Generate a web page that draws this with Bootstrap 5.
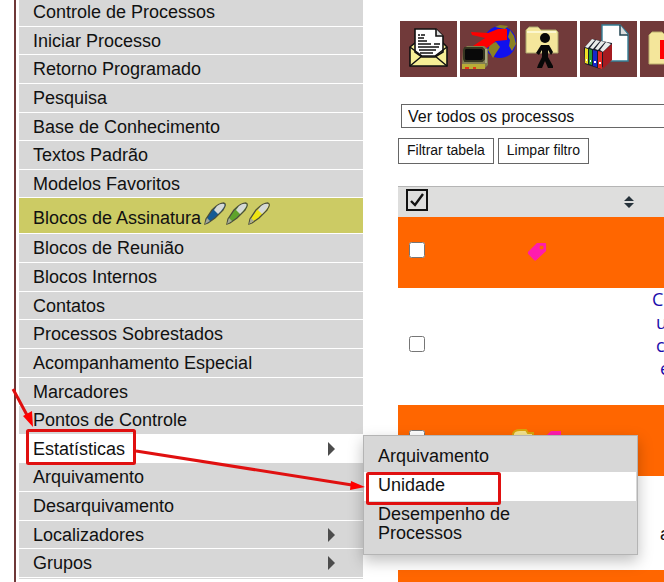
<!DOCTYPE html>
<html lang="pt-BR">
<head>
<meta charset="utf-8">
<meta name="viewport" content="width=device-width, initial-scale=1">
<title>Controle de Processos</title>
<link href="https://cdn.jsdelivr.net/npm/bootstrap@5.3.0/dist/css/bootstrap.min.css" rel="stylesheet">
<style>
body { font-family: "Liberation Sans", Arial, sans-serif; font-size: 18px; line-height: 19px; color: #111; background: #fff; }
.side { flex: 0 0 349px; margin-left: 14px; border-left: 2px solid #6e3838; padding-left: 3px; }
.side-menu { margin-top: -2px; padding-bottom: 2px; }
.side-menu > li { flex: 1 1 28px; border-bottom: 1px solid #fff; background: #d7d7d7; position: relative; }
.side-menu > li.pens { flex: 0 0 36px; background: #cccb64; }
.side-menu > li.open { background: #fff; }
.side-menu > li.tail { flex: 0 0 2px; }
.side-menu a, .sub-menu a { color: inherit; text-decoration: none; display: block; padding: 5px 14px 0; }
.side-menu .pens > a { display: flex; gap: 3px; padding-top: 4px; }
.side-menu .pens span { padding-top: 7px; }
.side-menu > li > a.has-sub { display: flex; justify-content: space-between; padding-right: 28px; }
.caret-r { width: 7px; height: 14px; margin-top: 2px; fill: #4c4c4c; }
.sub-menu { position: absolute; left: 100%; top: 0; width: 275px; z-index: 5; background: #d7d7d7; border: 1px solid #b4b4b4; padding: 7px 1px 5px 0; box-shadow: 0 6px 14px rgba(0,0,0,.25); }
.sub-menu a { padding: 4px 14px 6px; }
.sub-menu a.picked { background: #fff; }
.sub-menu li:last-child a { padding-right: 90px; }
.content-pane { padding: 21px 0 0 35px; }
.tool-btn { flex: 0 0 57px; height: 56px; background: #713a3a; border: 0; padding: 0; }
.tool-btn svg { display: block; width: 57px; height: 56px; }
.tools { gap: 3px; padding-left: 2px; }
.view-pick { appearance: none; font-size: 16px; line-height: 19px; height: 24px; width: 500px; margin: 27px 0 10px 3px; padding: 1px 6px; border: 1px solid #666; background: #fff; color: #111; }
.flat-btn { font-size: 14px; line-height: 16px; height: 26px; padding: 0 8px 2px 8px; background: #fff; border: 1px solid #666; color: #111; }
.proc-table { table-layout: fixed; width: 538px; margin-top: 22px; border-collapse: collapse; }
.proc-table th, .proc-table td { padding: 0; }
.proc-table .head { height: 30px; background: #dededd; border-top: 1px solid #b5b5b5; }
.proc-table .hot { background: #ff6600; }
.h-s { height: 71px; } .h-l { height: 117px; } .h-m { height: 94px; }
.proc-table input { display: block; width: 16px; height: 16px; margin: 0 0 4px 11px; }
.all-btn { display: block; margin: 0 0 4px 8px; width: 22px; height: 22px; padding: 0; border: 2px solid #111; background: #dededd; }
.all-btn svg { display: block; }
.desc { color: #1a0dab; font-family: "Open Sans", sans-serif; font-size: 18px; line-height: 23px; }
.notes { position: absolute; left: 0; top: 0; z-index: 10; pointer-events: none; }
</style>
<script src="https://cdn.jsdelivr.net/npm/bootstrap@5.3.0/dist/js/bootstrap.bundle.min.js"></script>
</head>
<body>
<div class="d-flex vh-100 overflow-hidden position-relative">
  <nav class="side d-flex flex-column" aria-label="Menu principal">
    <ul class="side-menu list-unstyled mb-0 d-flex flex-column flex-grow-1">
      <li><a href="#">Controle de Processos</a></li>
      <li><a href="#">Iniciar Processo</a></li>
      <li><a href="#">Retorno Programado</a></li>
      <li><a href="#">Pesquisa</a></li>
      <li><a href="#">Base de Conhecimento</a></li>
      <li><a href="#">Textos Padrão</a></li>
      <li><a href="#">Modelos Favoritos</a></li>
      <li class="pens"><a href="#"><span>Blocos de Assinatura</span>
        <svg width="68" height="24" viewBox="0 0 68 24" aria-hidden="true">
          <defs><g id="pen"><path d="M1 22L2 17L8 8Q15 1 20 1Q23 2 19 8L11 16L4 21Z" fill="currentColor" stroke="#4a4d3c" stroke-width="1.3"/><path d="M10 8L13 4Q17 1 20 2Q22 3 17 9L14 12Z" fill="#d5d9d6"/><path d="M1 22L3 16L6 19Z" fill="#a8aa98"/></g></defs>
          <use href="#pen" color="#145a94"/><use href="#pen" x="22" color="#5fa32c"/><use href="#pen" x="44" color="#eee414"/>
        </svg></a></li>
      <li><a href="#">Blocos de Reunião</a></li>
      <li><a href="#">Blocos Internos</a></li>
      <li><a href="#">Contatos</a></li>
      <li><a href="#">Processos Sobrestados</a></li>
      <li><a href="#">Acompanhamento Especial</a></li>
      <li><a href="#">Marcadores</a></li>
      <li><a href="#">Pontos de Controle</a></li>
      <li class="open"><a class="has-sub" href="#">Estatísticas<svg class="caret-r" viewBox="0 0 7 14"><path d="M0 0L7 7L0 14Z"/></svg></a>
        <ul class="sub-menu list-unstyled mb-0">
          <li><a href="#">Arquivamento</a></li>
          <li><a class="picked" href="#">Unidade</a></li>
          <li><a href="#">Desempenho de Processos</a></li>
        </ul>
      </li>
      <li><a href="#">Arquivamento</a></li>
      <li><a href="#">Desarquivamento</a></li>
      <li><a class="has-sub" href="#">Localizadores<svg class="caret-r" viewBox="0 0 7 14"><path d="M0 0L7 7L0 14Z"/></svg></a></li>
      <li><a class="has-sub" href="#">Grupos<svg class="caret-r" viewBox="0 0 7 14"><path d="M0 0L7 7L0 14Z"/></svg></a></li>
      <li class="tail"></li>
    </ul>
  </nav>

  <main class="content-pane flex-grow-1 overflow-hidden">
    <div class="tools d-flex">
      <button class="tool-btn" type="button" aria-label="Enviar correspondência">
        <svg viewBox="0 0 57 56"><path d="M10 26L15 22H43L47 26V45H10Z" fill="#f6ee96" stroke="#111" stroke-width="1.6"/><path d="M15 31V8H36L43 15V31L35 36H22Z" fill="#fff" stroke="#111" stroke-width="1.6"/><path d="M36 8V15H43" fill="#ddd" stroke="#111" stroke-width="1.6"/><path d="M18 14h2m1 0h4M18 17h6M18 20h9M18 23h13m3 0h6M18 26h21M19 29h17M20 32h13" stroke="#111" stroke-width="1.4"/><path d="M10 26L22 35H35L47 26M10 45L22 35M47 45L35 35" fill="none" stroke="#111" stroke-width="1.5"/></svg>
      </button>
      <button class="tool-btn" type="button" aria-label="Envio externo">
        <svg viewBox="0 0 57 56"><circle cx="40" cy="21" r="16" fill="#1010ee"/><path d="M30 23l6-2 4 5-4 6-3 5-5-8zM50 9l4 6 2 8-4 7-3-5 1-6-2-3zM35 6l5-2 8 1-3 3z" fill="#8a8222"/><path d="M11 11L28 12L38 8H47V19L36 20L27 27L13 25L25 17L12 14Z" fill="#f00"/><path d="M3 29L7 25H24L28 28V44L24 48H5L2 44Z" fill="#817e50"/><path d="M5 27H22L24 29V38L22 40H5L4 38V29Z" fill="#090909" stroke="#353520" stroke-width="2"/><path d="M2 43H25V48H2Z" fill="#b9ad37"/><path d="M5 47h4m4 0h3" stroke="#e33415" stroke-width="2"/><path d="M26 28V42" stroke="#aaa783" stroke-width="2"/></svg>
      </button>
      <button class="tool-btn" type="button" aria-label="Atribuir processo">
        <svg viewBox="0 0 57 56"><path d="M6 9L9 6H18L21 9H36L38 11V32H6Z" fill="#f4e69b" stroke="#aaa66c"/><path d="M7 11H36" stroke="#fffce0" stroke-width="1.5"/><circle cx="25" cy="17" r="5" fill="#080808"/><path d="M21 24H29L33 31L31 34L28 29V36L33 45V47H28L25 40L22 47H17L18 44L22 36V29L19 34L16 32Z" fill="#080808"/></svg>
      </button>
      <button class="tool-btn" type="button" aria-label="Incluir em bloco">
        <svg viewBox="0 0 57 56"><path d="M22 4H40L48 13V40H22Z" fill="#fff" stroke="#347f97" stroke-width="1.4"/><path d="M40 4V14H48" fill="#ddd" stroke="#234553" stroke-width="1.5"/><path d="M4 27L12 18L32 22L31 39L20 48L5 43Z" fill="#161b28"/><path d="M5 26L12 18L15 19L8 27ZM10 27L16 19L20 20L13 28ZM15 28L21 20L25 21L18 29ZM20 29L26 21L31 23L23 31Z" fill="#e9eceb"/><path d="M5 27L8 28V43L5 42Z" fill="#eee025"/><path d="M9 28L12 29V44L9 43Z" fill="#249f35"/><path d="M13 29L17 30V46L13 45Z" fill="#1628c8"/><path d="M18 30L22 31V48L18 47Z" fill="#e32a24"/><path d="M23 31L32 23V39L23 48Z" fill="#a51b20"/><path d="M19 42h2M14 41h2M10 40h1M6 39h1" stroke="#fff" stroke-width="2"/></svg>
      </button>
      <button class="tool-btn" type="button" aria-label="Concluir processo">
        <svg viewBox="0 0 57 56"><path d="M9 14L12 11H22L25 14H46V43H9Z" fill="#f4e69b" stroke="#bcb06d"/><path d="M20 19H38V38H20Z" fill="#f00"/></svg>
      </button>
    </div>

    <select class="view-pick d-block rounded-0" aria-label="Visualização"><option>Ver todos os processos</option></select>
    <div class="d-flex gap-1">
      <button class="flat-btn" type="button">Filtrar tabela</button>
      <button class="flat-btn" type="button">Limpar filtro</button>
    </div>

    <table class="proc-table">
      <colgroup><col style="width:39px"><col style="width:199px"><col></colgroup>
      <thead>
        <tr class="head">
          <th><button class="all-btn" type="button" aria-label="Selecionar todos"><svg width="18" height="18" viewBox="0 0 18 18"><path d="M3 10L7 14L15 3" fill="none" stroke="#111" stroke-width="2.4"/></svg></button></th>
          <th><svg class="d-block ms-auto" width="12" height="12" viewBox="0 0 12 12" fill="#26323a"><path d="M0 5L5 0L10 5ZM0 7H10L5 12Z"/></svg></th>
          <th></th>
        </tr>
      </thead>
      <tbody>
        <tr class="hot h-s">
          <td><input type="checkbox" aria-label="Processo 1"></td>
          <td><svg class="d-block mx-auto" width="20" height="20" viewBox="0 0 22 22"><path d="M11 1H20Q21 1 21 2V10L10 20Q9 21 8 20L1 13Q1 12 1 11ZM14 4V8H18V4Z" fill="#ff1cae" fill-rule="evenodd"/></svg></td>
          <td></td>
        </tr>
        <tr class="h-l">
          <td><input type="checkbox" aria-label="Processo 2"></td>
          <td></td>
          <td class="desc align-top ps-3"><div>C</div><div class="ps-1">u</div><div class="ps-1">c</div><div class="ps-2">e</div></td>
        </tr>
        <tr class="hot h-s">
          <td><input type="checkbox" aria-label="Processo 3"></td>
          <td><svg class="d-block mx-auto" width="50" height="22" viewBox="0 0 50 22"><path d="M1 5Q2 1 8 1H14L16 4H21V20H1Z" fill="#f4e38f" stroke="#d9a50c" stroke-width="2"/><path d="M39 2H49V10L38 21L29 12Z" fill="#ff1cae"/></svg></td>
          <td></td>
        </tr>
        <tr class="h-m">
          <td><input type="checkbox" aria-label="Processo 4"></td>
          <td></td>
          <td class="ps-4"><div class="pt-4">a</div></td>
        </tr>
        <tr class="hot h-s"><td></td><td></td><td></td></tr>
      </tbody>
    </table>
  </main>

  <svg class="notes" width="664" height="582" viewBox="0 0 664 582" fill="none" stroke="#e01010" stroke-width="3" aria-hidden="true">
    <rect x="27.5" y="430.5" width="107" height="33" rx="1"/>
    <rect x="367.5" y="473.5" width="132" height="30" rx="1"/>
    <path d="M13 389L28 417M136 451L352 485"/>
    <path d="M33 427L23 416L32 411ZM365 487L350 490L351 481Z" fill="#f00" stroke="none"/>
  </svg>
</div>
</body>
</html>
